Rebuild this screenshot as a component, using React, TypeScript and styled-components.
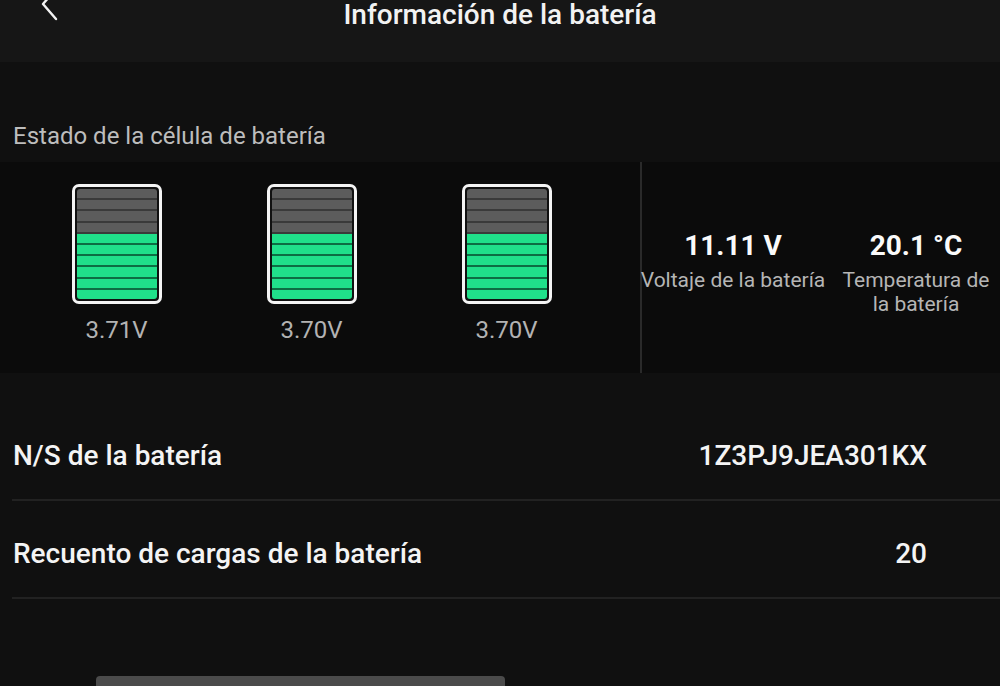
import React from "react";
import styled, { createGlobalStyle } from "styled-components";

const Global = createGlobalStyle`
  html, body { margin: 0; padding: 0; background: #101010; }
  body { font-family: Roboto, "Noto Sans", "Liberation Sans", sans-serif; color: #fff; overflow: hidden; }
  * { box-sizing: border-box; }
`;

const Page = styled.div`
  width: 1000px;
  height: 686px;
  background: #101010;
  display: flex;
  flex-direction: column;
  overflow: hidden;
`;

const Header = styled.header`
  height: 62px;
  flex: none;
  background: #161616;
  display: grid;
  grid-template-columns: 120px 1fr 120px;
  align-items: start;
`;

const Back = styled.button`
  background: none;
  border: none;
  padding: 0;
  margin: -16px 0 0 36px;
  width: 26px;
  height: 40px;
  display: flex;
  align-items: center;
  justify-content: center;
  cursor: pointer;
`;

const Title = styled.h1`
  margin: 0;
  padding-top: 1px;
  text-align: center;
  font-size: 28px;
  line-height: 28px;
  font-weight: 500;
  color: #f2f2f2;
`;

const SectionLabel = styled.div`
  margin: 60px 0 0 13px;
  font-size: 24px;
  line-height: 28px;
  color: #bdbdbd;
  height: 28px;
`;

const CellPanel = styled.section`
  margin-top: 12px;
  height: 211px;
  flex: none;
  background: #0b0b0b;
  display: flex;
`;

const Cells = styled.div`
  flex: none;
  width: 640px;
  padding: 22px 0 0 19px;
  display: grid;
  grid-template-columns: repeat(3, 195px);
  align-content: start;
`;

const Cell = styled.div`
  display: flex;
  flex-direction: column;
  align-items: center;
`;

const Battery = styled.div`
  width: 90px;
  height: 120px;
  border: 3px solid #f4f4f4;
  border-radius: 7px;
  padding: 2px;
  background: #111;
  display: flex;
  flex-direction: column;
`;

const Segment = styled.div<{ $on: boolean }>`
  flex: 1;
  background: ${(p) => (p.$on ? "#20e08a" : "#5c5c5c")};
  border-bottom: 2px solid ${(p) => (p.$on ? "#0d6e43" : "#3a3a3a")};
  &:first-child { border-radius: 3px 3px 0 0; }
  &:last-child { border-bottom: none; border-radius: 0 0 3px 3px; }
`;

const CellVolt = styled.div`
  margin-top: 12px;
  font-size: 24px;
  line-height: 28px;
  color: #b3b3b3;
`;

const VDivider = styled.div`
  width: 2px;
  background: #2a2a2a;
  flex: none;
`;

const Stats = styled.div`
  flex: none;
  display: grid;
  grid-template-columns: 182px 184px;
  align-content: start;
  padding-top: 68px;
`;

const Stat = styled.div`
  display: flex;
  flex-direction: column;
  align-items: center;
  text-align: center;
`;

const StatValue = styled.div`
  font-size: 28px;
  line-height: 32px;
  font-weight: 700;
  color: #fafafa;
`;

const StatLabel = styled.div`
  margin-top: 6px;
  font-size: 21px;
  line-height: 24px;
  color: #b5b5b5;
  white-space: pre;
`;

const Rows = styled.div`
  margin: 30px 0 0 12px;
  display: flex;
  flex-direction: column;
`;

const Row = styled.div`
  height: 98px;
  padding: 8px 73px 0 1px;
  border-bottom: 2px solid #222;
  display: flex;
  align-items: center;
  justify-content: space-between;
  font-size: 28px;
  font-weight: 500;
  color: #f4f4f4;
`;

const BottomBar = styled.div`
  margin: 77px 0 0 96px;
  width: 409px;
  height: 12px;
  background: #4b4b4b;
  border-radius: 4px 4px 0 0;
  flex: none;
`;

const cells = [
  { v: "3.71V", level: 6 },
  { v: "3.70V", level: 6 },
  { v: "3.70V", level: 6 },
];

export default function App() {
  return (
    <>
      <Global />
      <Page>
        <Header>
          <Back aria-label="Atrás">
            <svg width="20" height="34" viewBox="0 0 20 34" fill="none">
              <path d="M17 2 L4 17 L17 32" stroke="#f2f2f2" strokeWidth="2.4" strokeLinecap="round" strokeLinejoin="round" />
            </svg>
          </Back>
          <Title>Información de la batería</Title>
          <div />
        </Header>
        <SectionLabel>Estado de la célula de batería</SectionLabel>
        <CellPanel>
          <Cells>
            {cells.map((c, i) => (
              <Cell key={i}>
                <Battery>
                  {Array.from({ length: 10 }).map((_, k) => (
                    <Segment key={k} $on={k >= 10 - c.level} />
                  ))}
                </Battery>
                <CellVolt>{c.v}</CellVolt>
              </Cell>
            ))}
          </Cells>
          <VDivider />
          <Stats>
            <Stat>
              <StatValue>11.11 V</StatValue>
              <StatLabel>Voltaje de la batería</StatLabel>
            </Stat>
            <Stat>
              <StatValue>20.1 °C</StatValue>
              <StatLabel>{"Temperatura de\nla batería"}</StatLabel>
            </Stat>
          </Stats>
        </CellPanel>
        <Rows>
          <Row>
            <span>N/S de la batería</span>
            <span>1Z3PJ9JEA301KX</span>
          </Row>
          <Row>
            <span>Recuento de cargas de la batería</span>
            <span>20</span>
          </Row>
        </Rows>
        <BottomBar />
      </Page>
    </>
  );
}
